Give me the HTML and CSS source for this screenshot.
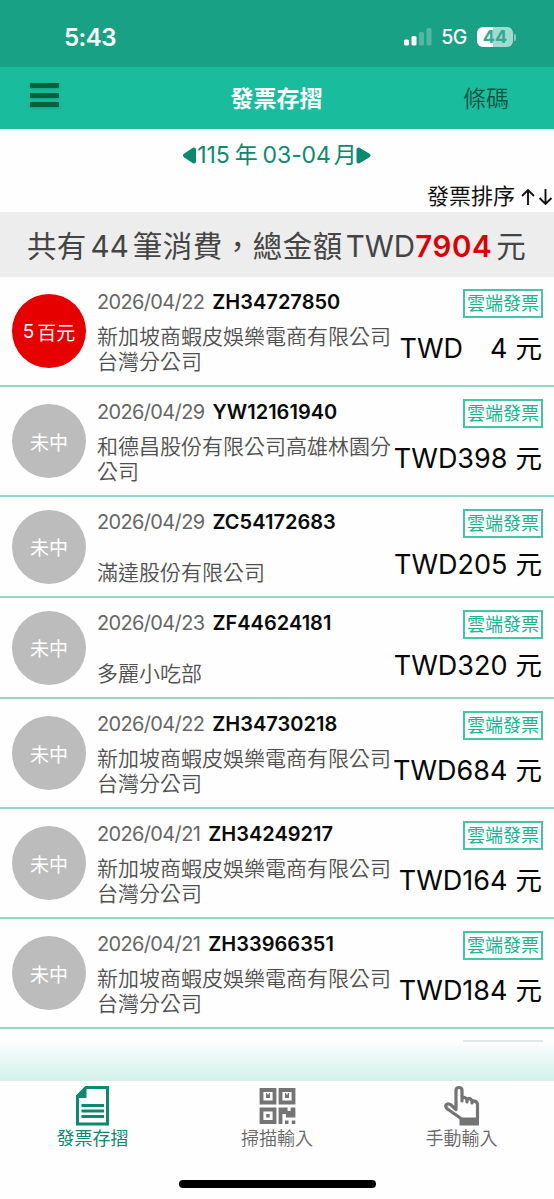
FILE: index.html
```
<!DOCTYPE html>
<html lang="zh-Hant">
<head>
<meta charset="utf-8">
<title>發票存摺</title>
<link rel="stylesheet" href="styles.css">
</head>
<body>
<div class="app">
  <div class="status">
    <span class="clock">5:43</span>
    <div class="status-right">
      <svg class="signal" width="28" height="18" viewBox="0 0 28 18" fill="#fff"><rect x="0" y="11.5" width="5" height="6" rx="1.5"/><rect x="7.5" y="8" width="5" height="9.500" rx="1.500"/><rect x="15" y="4" width="5" height="13.500" rx="1.500" opacity=".25"/><rect x="22.500" y="0" width="5" height="17.500" rx="1.500" opacity=".25"/></svg>
      <span class="network">5G</span>
      <span class="battery">44</span><span class="battery-tip"></span>
    </div>
  </div>
  <header class="navbar">
    <div class="menu"><i></i><i></i><i></i></div>
    <h1 class="title">發票存摺</h1>
    <span class="barcode">條碼</span>
  </header>
  <div class="period">
    <svg width="13" height="17" viewBox="0 0 13 17"><path d="M11 2.500 L2 8.500 L11 14.500 Z" /></svg>
    <span class="period-text"><span>115</span><span>年</span><span>03-04</span><span class="month">月</span></span>
    <svg width="15" height="17" viewBox="0 0 15 17"><path d="M2.500 2.500 L12.500 8.500 L2.500 14.500 Z" /></svg>
  </div>
  <div class="sort"><span>發票排序</span>
    <svg width="34" height="18" viewBox="0 0 34 18" fill="none" stroke="#111" stroke-width="1.900"><path d="M8 17V2M2 8L8 2L14 8M25.500 1V16M19.500 10L25.500 16L31.500 10"/></svg>
  </div>
  <div class="summary"><span class="s1">共有</span><span class="s2">44</span><span class="s3">筆消費，總金額</span><span class="s4">TWD</span><b class="s5">7904</b><span class="s6">元</span></div>
  <main class="list">
    <article class="row"><div class="badge win"><span>5</span><span>百元</span></div><div class="info"><div class="meta"><span class="date">2026/04/22</span><b class="number">ZH34727850</b></div><div class="company">新加坡商蝦皮娛樂電商有限公司台灣分公司</div></div><div class="side"><span class="tag">雲端發票</span><div class="price"><span class="cur gap">TWD</span><span class="amt">4</span><span class="unit">元</span></div></div></article>
    <article class="row"><div class="badge">未中</div><div class="info"><div class="meta"><span class="date">2026/04/29</span><b class="number">YW12161940</b></div><div class="company">和德昌股份有限公司高雄林園分公司</div></div><div class="side"><span class="tag">雲端發票</span><div class="price"><span class="amt">TWD398</span><span class="unit">元</span></div></div></article>
    <article class="row short"><div class="badge">未中</div><div class="info"><div class="meta"><span class="date">2026/04/29</span><b class="number">ZC54172683</b></div><div class="company">滿達股份有限公司</div></div><div class="side"><span class="tag">雲端發票</span><div class="price"><span class="amt">TWD205</span><span class="unit">元</span></div></div></article>
    <article class="row short"><div class="badge">未中</div><div class="info"><div class="meta"><span class="date">2026/04/23</span><b class="number">ZF44624181</b></div><div class="company">多麗小吃部</div></div><div class="side"><span class="tag">雲端發票</span><div class="price"><span class="amt">TWD320</span><span class="unit">元</span></div></div></article>
    <article class="row"><div class="badge">未中</div><div class="info"><div class="meta"><span class="date">2026/04/22</span><b class="number">ZH34730218</b></div><div class="company">新加坡商蝦皮娛樂電商有限公司台灣分公司</div></div><div class="side"><span class="tag">雲端發票</span><div class="price"><span class="amt">TWD684</span><span class="unit">元</span></div></div></article>
    <article class="row"><div class="badge">未中</div><div class="info"><div class="meta"><span class="date">2026/04/21</span><b class="number">ZH34249217</b></div><div class="company">新加坡商蝦皮娛樂電商有限公司台灣分公司</div></div><div class="side"><span class="tag">雲端發票</span><div class="price"><span class="amt">TWD164</span><span class="unit">元</span></div></div></article>
    <article class="row"><div class="badge">未中</div><div class="info"><div class="meta"><span class="date">2026/04/21</span><b class="number">ZH33966351</b></div><div class="company">新加坡商蝦皮娛樂電商有限公司台灣分公司</div></div><div class="side"><span class="tag">雲端發票</span><div class="price"><span class="amt">TWD184</span><span class="unit">元</span></div></div></article>
  </main>
  <div class="fade"><span class="tag-edge"></span></div>
  <nav class="tabs">
    <div class="tab active"><svg width="40" height="42" viewBox="0 0 40 42"><path d="M13 3.500H34.500V40H4.500V12Z" fill="none" stroke="currentColor" stroke-width="3"/><path d="M13.500 2V14H3V12Z" fill="currentColor"/><path d="M8.500 21.500H31M8.500 27H31M8.500 32.500H31" stroke="currentColor" stroke-width="2.800"/></svg><span>發票存摺</span></div>
    <div class="tab"><svg width="40" height="42" viewBox="0 0 40 42" fill="none" stroke="currentColor" stroke-width="3.800"><path d="M4.500 6h13v12.500H4.500zM23.500 6h13v12.500h-13zM4.500 25.500h13V38H4.500z"/><path d="M9 9h1.200v1.500h1.600V9H13v5H9zM28 9h1.200v1.500h1.600V9H32v5h-4zM9.200 30h3.500v3.500H9.200z" fill="currentColor" stroke="none"/><path d="M21.600 23.500h9v3.500h3v-3.500h4.800v10h-9.500v-3.500h-3.500v10h-3.800zM28 36.500h3.500V40H28zM34.800 36.500h3.500V40h-3.500z" fill="currentColor" stroke="none"/></svg><span>掃描輸入</span></div>
    <div class="tab"><svg width="40" height="42" viewBox="0 0 40 42"><path d="M19 34.500L5.500 25Q2.500 22 4.500 20.500Q6.500 19 9 21L14 25.500V6.500Q14 3.500 17 3.500Q20 3.500 20 6.500V17V14.500Q22.500 12 25 15.500V18V15.500Q28 13 30 17V19V17Q34.500 16.500 35.500 20V35" fill="none" stroke="currentColor" stroke-width="3.200" stroke-linejoin="round"/><path d="M17.500 33.500H37V41.500H17.500Z" fill="currentColor"/></svg><span>手動輸入</span></div>
  </nav>
  <div class="home"></div>
</div>
</body>
</html>
```
FILE: styles.css
```
* { box-sizing: border-box; }
body { margin: 0; background: #fff; font-family: Inter, "Noto Sans CJK TC", sans-serif; }
.app { width: 554px; height: 1199px; overflow: hidden; display: flex; flex-direction: column; background: #fefefe; }
.app > * { flex-shrink: 0; }
.status { height: 67px; padding: 7px 38px 0 64px; background: #19a186; color: #fff; display: flex; justify-content: space-between; align-items: center; }
.clock { font-size: 24px; font-weight: 600; letter-spacing: -.5px; }
.status-right { display: flex; align-items: center; }
.network { margin-left: 9px; font-size: 19.500px; font-weight: 500; letter-spacing: -.4px; }
.battery { margin-left: 10px; width: 36px; height: 20px; border-radius: 6px; background: linear-gradient(90deg, #fff 44%, #a3d9cf 44%); color: #30aa91; font-size: 18px; font-weight: 700; line-height: 20px; text-align: center; }
.battery-tip { width: 2px; height: 7px; margin-left: 1px; border-radius: 0 2px 2px 0; background: #86cdbf; }
.navbar { height: 62px; padding: 0 45px 0 30px; background: #1abc9e; display: grid; grid-template-columns: 100px 1fr 86px; align-items: center; }
.menu { display: flex; flex-direction: column; gap: 4.500px; margin-top: -6px; }
.menu i { width: 29px; height: 5px; background: #075f3b; box-shadow: 0 1px 3px #0755; }
.title { margin: 2px 0 0; font-size: 23px; line-height: 30px; font-weight: 700; color: #fff; text-align: center; }
.barcode { margin-top: 2px; text-align: right; font-size: 23px; line-height: 30px; font-weight: 350; color: #045540; }
.period { height: 52px; display: flex; justify-content: center; align-items: center; color: #0c8a70; }
.period svg path { fill: #0c8a70; stroke: #0c8a70; stroke-width: 4; stroke-linejoin: round; }
.period-text { display: flex; gap: 5px; font-size: 23px; line-height: 30px; margin: 0 -1px 0 1px; letter-spacing: -.1px; }
.month { margin-left: -2px; }
.sort { height: 31px; display: flex; justify-content: flex-end; align-items: center; gap: 5px; font-size: 22px; line-height: 28px; color: #111; }
.sort > span { margin-top: -2px; }
.summary { height: 65px; padding: 2px 0 0 27px; background: #ededed; color: #444; display: flex; align-items: center; font-size: 29.500px; line-height: 40px; white-space: nowrap; }
.s1 { letter-spacing: .3px; }
.s2 { margin: 0 4px; }
.s3 { letter-spacing: .5px; }
.s4 { margin-left: 3px; }
.s5 { color: #de0000; font-weight: 600; letter-spacing: .6px; }
.s6 { margin-left: 4px; }
.row { height: 110px; padding: 0 11px 0 12px; display: grid; grid-template-columns: 74px 297px 138px; column-gap: 11px; border-bottom: 2px solid #91d8c8; }
.row.short { height: 101px; }
.badge { width: 74px; height: 74px; align-self: center; border-radius: 50%; background: #bcbcbc; color: #fff; font-size: 19px; display: flex; justify-content: center; align-items: center; }
.badge.win { background: #e60000; gap: 3px; }
.info { padding-top: 12px; }
.meta { height: 26px; display: flex; align-items: center; gap: 8px; font-size: 20px; white-space: nowrap; }
.date { color: #666; letter-spacing: -.65px; }
.number { font-weight: 600; color: #0a0a0a; letter-spacing: .02px; }
.company { margin-top: 9px; font-size: 21px; line-height: 25px; font-weight: 350; color: #505050; word-break: break-all; }
.short .company { margin-top: 25px; }
.side { margin-left: -11px; padding-top: 12px; display: flex; flex-direction: column; align-items: flex-end; }
.tag { width: 80px; height: 29px; border: 2px solid #44c5ab; color: #16b491; font-size: 18px; line-height: 26px; text-align: center; white-space: nowrap; }
.price { height: 34px; margin: 13px 1px 0 0; display: flex; align-items: center; font-size: 27px; white-space: nowrap; color: #080808; }
.short .price { margin-top: 9px; }
.gap { margin-right: 27px; }
.unit { margin: -3px 0 0 8px; font-size: 26.500px; }
.fade { height: 52px; padding: 11px 11px 0; background: linear-gradient(#fefefe 20%, #d2f1e9); display: flex; justify-content: flex-end; }
.tag-edge { width: 80px; height: 2px; background: #dcebea; }
.tabs { height: 99px; padding-top: 3px; display: grid; grid-template-columns: 185px 184px 185px; }
.tab { display: flex; flex-direction: column; align-items: center; color: #747474; font-size: 18px; line-height: 26px; }
.tab > span { font-weight: 350; color: #666; }
.tab.active { color: #0a8a6f; }
.tab.active > span { font-weight: 400; color: inherit; }
.home { width: 197px; height: 8px; margin: 0 auto; border-radius: 4px; background: #000; }
```
